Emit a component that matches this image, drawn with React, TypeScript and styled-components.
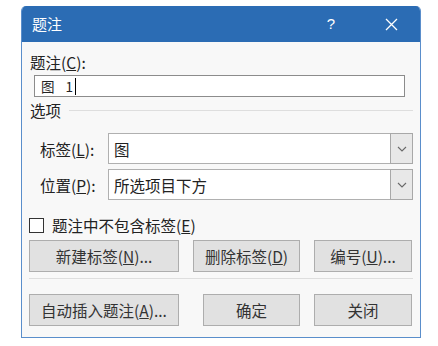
import styled, { createGlobalStyle } from "styled-components";

const GlobalStyle = createGlobalStyle`
  html, body {
    margin: 0;
    padding: 0;
    background: #ffffff;
  }
  body {
    font-family: "Noto Sans CJK SC", "Noto Sans", sans-serif;
    color: #222;
  }
`;

const Dialog = styled.div`
  box-sizing: border-box;
  width: 400px;
  margin: 6px 0 0 21px;
  border: 1px solid #5a8ecb;
  border-top: none;
  border-radius: 5px 5px 0 0;
  background: #f8f8f8;
  overflow: hidden;
`;

const TitleBar = styled.div`
  height: 36px;
  background: #2b6cb4;
  color: #fff;
  display: flex;
  align-items: center;
  padding: 0 22px 0 10px;
  font-size: 15px;
  line-height: 18px;
`;

const Title = styled.span`
  flex: 1;
`;

const Help = styled.span`
  font-family: "Liberation Sans", sans-serif;
  font-size: 15px;
  margin-right: 50px;
`;

const Body = styled.div`
  display: flex;
  flex-direction: column;
  padding: 11px 7px 11px 7px;
`;

const Label = styled.div<{ $indent?: number }>`
  height: 18px;
  line-height: 18px;
  font-size: 15.5px;
  padding-left: ${(p) => p.$indent ?? 1}px;
  white-space: nowrap;
`;

const TextInput = styled.div`
  box-sizing: border-box;
  margin: 4px 0 0 5px;
  width: 371px;
  height: 22px;
  border: 1px solid #8c8c8c;
  background: #fff;
  display: flex;
  align-items: center;
  padding-left: 6px;
  font-size: 13.5px;
  line-height: 16px;
`;

const InputNumber = styled.span`
  margin-left: 11px;
`;

const Caret = styled.span`
  display: inline-block;
  width: 1px;
  height: 17px;
  background: #000;
  margin-left: 2px;
`;

const GroupHeader = styled.div`
  margin-top: 4px;
  height: 18px;
  display: flex;
  align-items: center;
  gap: 8px;
  font-size: 15.5px;
  line-height: 18px;
  padding-left: 1px;

  &::after {
    content: "";
    flex: 1;
    height: 1px;
    background: #dedede;
  }
`;

const SelectRow = styled.div<{ $top: number }>`
  display: grid;
  grid-template-columns: 79px 1fr;
  align-items: center;
  margin-top: ${(p) => p.$top}px;
`;

const Select = styled.div`
  box-sizing: border-box;
  height: 31px;
  border: 1px solid #b0b0b0;
  background: #fff;
  display: flex;
  align-items: stretch;
`;

const SelectValue = styled.div`
  flex: 1;
  display: flex;
  align-items: center;
  padding-left: 5px;
  font-size: 15.5px;
`;

const DropButton = styled.div`
  box-sizing: border-box;
  width: 23px;
  background: #e8e8e8;
  border: 1px solid #a8a8a8;
  margin: -1px -1px -1px 0;
  display: flex;
  align-items: center;
  justify-content: center;
`;

const CheckRow = styled.div`
  margin-top: 16px;
  height: 18px;
  display: flex;
  align-items: center;
  gap: 8px;
  font-size: 15.5px;
  line-height: 18px;
`;

const CheckBox = styled.span`
  box-sizing: border-box;
  width: 15px;
  height: 15px;
  border: 1px solid #333;
  background: #fff;
`;

const ButtonRow = styled.div<{ $top: number }>`
  display: grid;
  grid-template-columns: 150px 1fr 98px;
  column-gap: 14px;
  margin-top: ${(p) => p.$top}px;
  padding-right: 1px;
`;

const Button = styled.div<{ $width?: number }>`
  box-sizing: border-box;
  height: 32px;
  width: ${(p) => (p.$width ? `${p.$width}px` : "100%")};
  justify-self: end;
  border: 1px solid #adadad;
  background: #e1e1e1;
  display: flex;
  align-items: center;
  justify-content: center;
  font-size: 15.5px;
  color: #333;
  white-space: nowrap;
`;

const Separator = styled.div`
  margin-top: 6px;
  height: 1px;
  background: #dedede;
`;

const Chevron = () => (
  <svg width="10" height="6" viewBox="0 0 10 6">
    <path d="M1 1 L5 5 L9 1" fill="none" stroke="#6a6a6a" strokeWidth="1.1" />
  </svg>
);

const CloseIcon = () => (
  <svg width="13" height="13" viewBox="0 0 13 13">
    <path d="M1 1 L12 12 M12 1 L1 12" stroke="#fff" strokeWidth="1.3" />
  </svg>
);

export default function App() {
  return (
    <>
      <GlobalStyle />
      <Dialog>
        <TitleBar>
          <Title>题注</Title>
          <Help>?</Help>
          <CloseIcon />
        </TitleBar>
        <Body>
          <Label>
            题注(<u>C</u>):
          </Label>
          <TextInput>
            图<InputNumber>1</InputNumber>
            <Caret />
          </TextInput>
          <GroupHeader>选项</GroupHeader>
          <SelectRow $top={14}>
            <Label $indent={11}>
              标签(<u>L</u>):
            </Label>
            <Select>
              <SelectValue>图</SelectValue>
              <DropButton>
                <Chevron />
              </DropButton>
            </Select>
          </SelectRow>
          <SelectRow $top={5}>
            <Label $indent={11}>
              位置(<u>P</u>):
            </Label>
            <Select>
              <SelectValue>所选项目下方</SelectValue>
              <DropButton>
                <Chevron />
              </DropButton>
            </Select>
          </SelectRow>
          <CheckRow>
            <CheckBox />
            <span>
              题注中不包含标签(<u>E</u>)
            </span>
          </CheckRow>
          <ButtonRow $top={6}>
            <Button>
              新建标签(<u>N</u>)...
            </Button>
            <Button $width={107}>
              删除标签(<u>D</u>)
            </Button>
            <Button>
              编号(<u>U</u>)...
            </Button>
          </ButtonRow>
          <Separator />
          <ButtonRow $top={15}>
            <Button>
              自动插入题注(<u>A</u>)...
            </Button>
            <Button $width={97}>确定</Button>
            <Button>关闭</Button>
          </ButtonRow>
        </Body>
      </Dialog>
    </>
  );
}
